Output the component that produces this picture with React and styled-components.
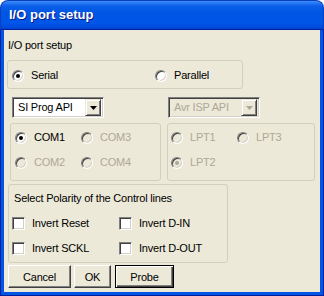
import React from 'react';
import styled, { createGlobalStyle } from 'styled-components';

const GlobalStyle = createGlobalStyle`
  html, body {
    margin: 0;
    padding: 0;
    background: #ffffff;
  }
  body {
    font-family: "Liberation Sans", Arial, sans-serif;
    font-size: 11px;
    letter-spacing: -0.2px;
  }
`;

const Window = styled.div`
  width: 324px;
  height: 296px;
  display: flex;
  flex-direction: column;
`;

const TitleBar = styled.div`
  height: 29px;
  flex: none;
  box-sizing: border-box;
  border-radius: 8px 8px 0 0;
  padding: 0 0 0 8px;
  display: flex;
  align-items: center;
  background: linear-gradient(
    to bottom,
    #3c8cf8 0px,
    #2a7af5 2px,
    #0a5ee8 5px,
    #0055e3 12px,
    #0056e8 22px,
    #0048d8 27px,
    #003ac8 29px
  );
  border: 1px solid #0a3fc0;
  border-bottom: none;
`;

const Title = styled.span`
  color: #ffffff;
  font-weight: bold;
  font-size: 13px;
  letter-spacing: 0;
  text-shadow: 1px 1px 0 #0a1a84;
  padding-bottom: 1px;
`;

const Client = styled.div`
  flex: 1;
  background: #ece9d8;
  border-style: solid;
  border-width: 0 4px 4px 4px;
  border-color: #0055e5;
  box-shadow: inset 0 0 0 0 transparent, 0 0 0 0 transparent;
  outline: 1px solid #00209c;
  outline-offset: -1px;
  display: flex;
  flex-direction: column;
`;

const Caption = styled.div`
  margin: 10px 0 0 4px;
  line-height: 13px;
  color: #000;
`;

const Group = styled.div`
  box-sizing: border-box;
  border: 1px solid #d0d0bf;
  border-radius: 3px;
  margin-left: ${(p) => p.left}px;
  margin-top: ${(p) => p.top}px;
  width: ${(p) => p.w}px;
  height: ${(p) => p.h}px;
`;

const ModeGroup = styled(Group)`
  display: flex;
  align-items: center;
  padding: 2px 0 0 4px;
`;

const Option = styled.label`
  display: flex;
  align-items: center;
  gap: 7px;
  width: ${(p) => p.w || 'auto'}px;
  height: ${(p) => p.h || 13}px;
  line-height: 13px;
  color: ${(p) => (p.disabled ? '#aca899' : '#000')};
`;

const Radio = styled.span`
  box-sizing: border-box;
  flex: none;
  width: 12px;
  height: 12px;
  border-radius: 50%;
  border: 1px solid;
  border-color: #808080 #ffffff #ffffff #808080;
  box-shadow: inset 1px 1px 0 #404040, inset -1px -1px 0 #d4d0c8;
  background: ${(p) => (p.disabled ? '#ece9d8' : '#ffffff')};
  display: flex;
  align-items: center;
  justify-content: center;
  transform: rotate(0deg);

  &::after {
    content: '';
    display: ${(p) => (p.checked ? 'block' : 'none')};
    width: 4px;
    height: 4px;
    border-radius: 50%;
    background: ${(p) => (p.disabled ? '#aca899' : '#000')};
  }
`;

const Check = styled.span`
  box-sizing: border-box;
  flex: none;
  width: 13px;
  height: 13px;
  border: 1px solid;
  border-color: #808080 #ffffff #ffffff #808080;
  box-shadow: inset 1px 1px 0 #404040, inset -1px -1px 0 #d4d0c8;
  background: #ffffff;
`;

const ComboRow = styled.div`
  display: flex;
  margin: 8px 0 0 8px;
  gap: 64px;
`;

const Combo = styled.div`
  box-sizing: border-box;
  width: 92px;
  height: 21px;
  border: 1px solid;
  border-color: #808080 #ffffff #ffffff #808080;
  box-shadow: inset 1px 1px 0 #404040, inset -1px -1px 0 #d4d0c8;
  background: ${(p) => (p.disabled ? '#ece9d8' : '#ffffff')};
  color: ${(p) => (p.disabled ? '#aca899' : '#000')};
  display: flex;
  align-items: center;
  padding: 2px 2px 2px 5px;
`;

const ComboText = styled.span`
  flex: 1;
  line-height: 13px;
`;

const ArrowButton = styled.span`
  box-sizing: border-box;
  width: 16px;
  height: 17px;
  background: #ece9d8;
  border: 1px solid;
  border-color: #ece9d8 #404040 #404040 #ece9d8;
  box-shadow: inset 1px 1px 0 #ffffff, inset -1px -1px 0 #808080;
  display: flex;
  align-items: center;
  justify-content: center;
`;

const PortRow = styled.div`
  display: flex;
  margin-top: 5px;
`;

const PortGroup = styled(Group)`
  display: grid;
  grid-template-columns: ${(p) => p.col}px ${(p) => p.col}px;
  grid-auto-rows: 25px;
  align-content: start;
  padding: 7px 0 0 ${(p) => p.pad}px;
`;

const PolarityGroup = styled(Group)`
  padding: 7px 0 0 0;
`;

const GroupTitle = styled.div`
  line-height: 13px;
  padding-left: 5px;
`;

const CheckGrid = styled.div`
  display: grid;
  grid-template-columns: 107px 100px;
  grid-auto-rows: 13px;
  row-gap: 12px;
  margin-top: 12px;
  padding-left: 3px;
`;

const ButtonRow = styled.div`
  display: flex;
  margin: 2px 0 0 4px;
`;

const Button = styled.button`
  box-sizing: border-box;
  width: ${(p) => p.w}px;
  height: 23px;
  margin-right: ${(p) => p.gap || 0}px;
  padding: 0;
  font-family: "Liberation Sans", Arial, sans-serif;
  font-size: 11px;
  letter-spacing: -0.2px;
  color: #000;
  background: #ece9d8;
  border: 1px solid;
  border-color: ${(p) => (p.primary ? '#000 #000 #000 #000' : '#ffffff #404040 #404040 #ffffff')};
  box-shadow: ${(p) =>
    p.primary
      ? 'inset 1px 1px 0 #ffffff, inset -1px -1px 0 #404040, inset -2px -2px 0 #808080'
      : 'inset -1px -1px 0 #808080'};
`;

const Arrow = ({ color }) => (
  <svg width="7" height="4" viewBox="0 0 7 4">
    <path d="M0 0h7L3.5 4z" fill={color} />
  </svg>
);

export default function App() {
  return (
    <>
      <GlobalStyle />
      <Window>
        <TitleBar>
          <Title>I/O port setup</Title>
        </TitleBar>
        <Client>
          <Caption>I/O port setup</Caption>

          <ModeGroup left={3} top={8} w={236} h={29}>
            <Option w={143}>
              <Radio checked />
              Serial
            </Option>
            <Option>
              <Radio />
              Parallel
            </Option>
          </ModeGroup>

          <ComboRow>
            <Combo>
              <ComboText>SI Prog API</ComboText>
              <ArrowButton>
                <Arrow color="#000" />
              </ArrowButton>
            </Combo>
            <Combo disabled>
              <ComboText>Avr ISP API</ComboText>
              <ArrowButton>
                <Arrow color="#aca899" />
              </ArrowButton>
            </Combo>
          </ComboRow>

          <PortRow>
            <PortGroup left={6} top={0} w={151} h={58} col={66} pad={4}>
              <Option>
                <Radio checked />
                COM1
              </Option>
              <Option disabled>
                <Radio disabled />
                COM3
              </Option>
              <Option disabled>
                <Radio disabled />
                COM2
              </Option>
              <Option disabled>
                <Radio disabled />
                COM4
              </Option>
            </PortGroup>
            <PortGroup left={6} top={0} w={148} h={58} col={66} pad={3}>
              <Option disabled>
                <Radio disabled />
                LPT1
              </Option>
              <Option disabled>
                <Radio disabled />
                LPT3
              </Option>
              <Option disabled>
                <Radio disabled checked />
                LPT2
              </Option>
            </PortGroup>
          </PortRow>

          <PolarityGroup left={4} top={3} w={220} h={79}>
            <GroupTitle>Select Polarity of the Control lines</GroupTitle>
            <CheckGrid>
              <Option>
                <Check />
                Invert Reset
              </Option>
              <Option>
                <Check />
                Invert D-IN
              </Option>
              <Option>
                <Check />
                Invert SCKL
              </Option>
              <Option>
                <Check />
                Invert D-OUT
              </Option>
            </CheckGrid>
          </PolarityGroup>

          <ButtonRow>
            <Button w={63} gap={3}>Cancel</Button>
            <Button w={37} gap={4}>OK</Button>
            <Button w={59} primary>Probe</Button>
          </ButtonRow>
        </Client>
      </Window>
    </>
  );
}
